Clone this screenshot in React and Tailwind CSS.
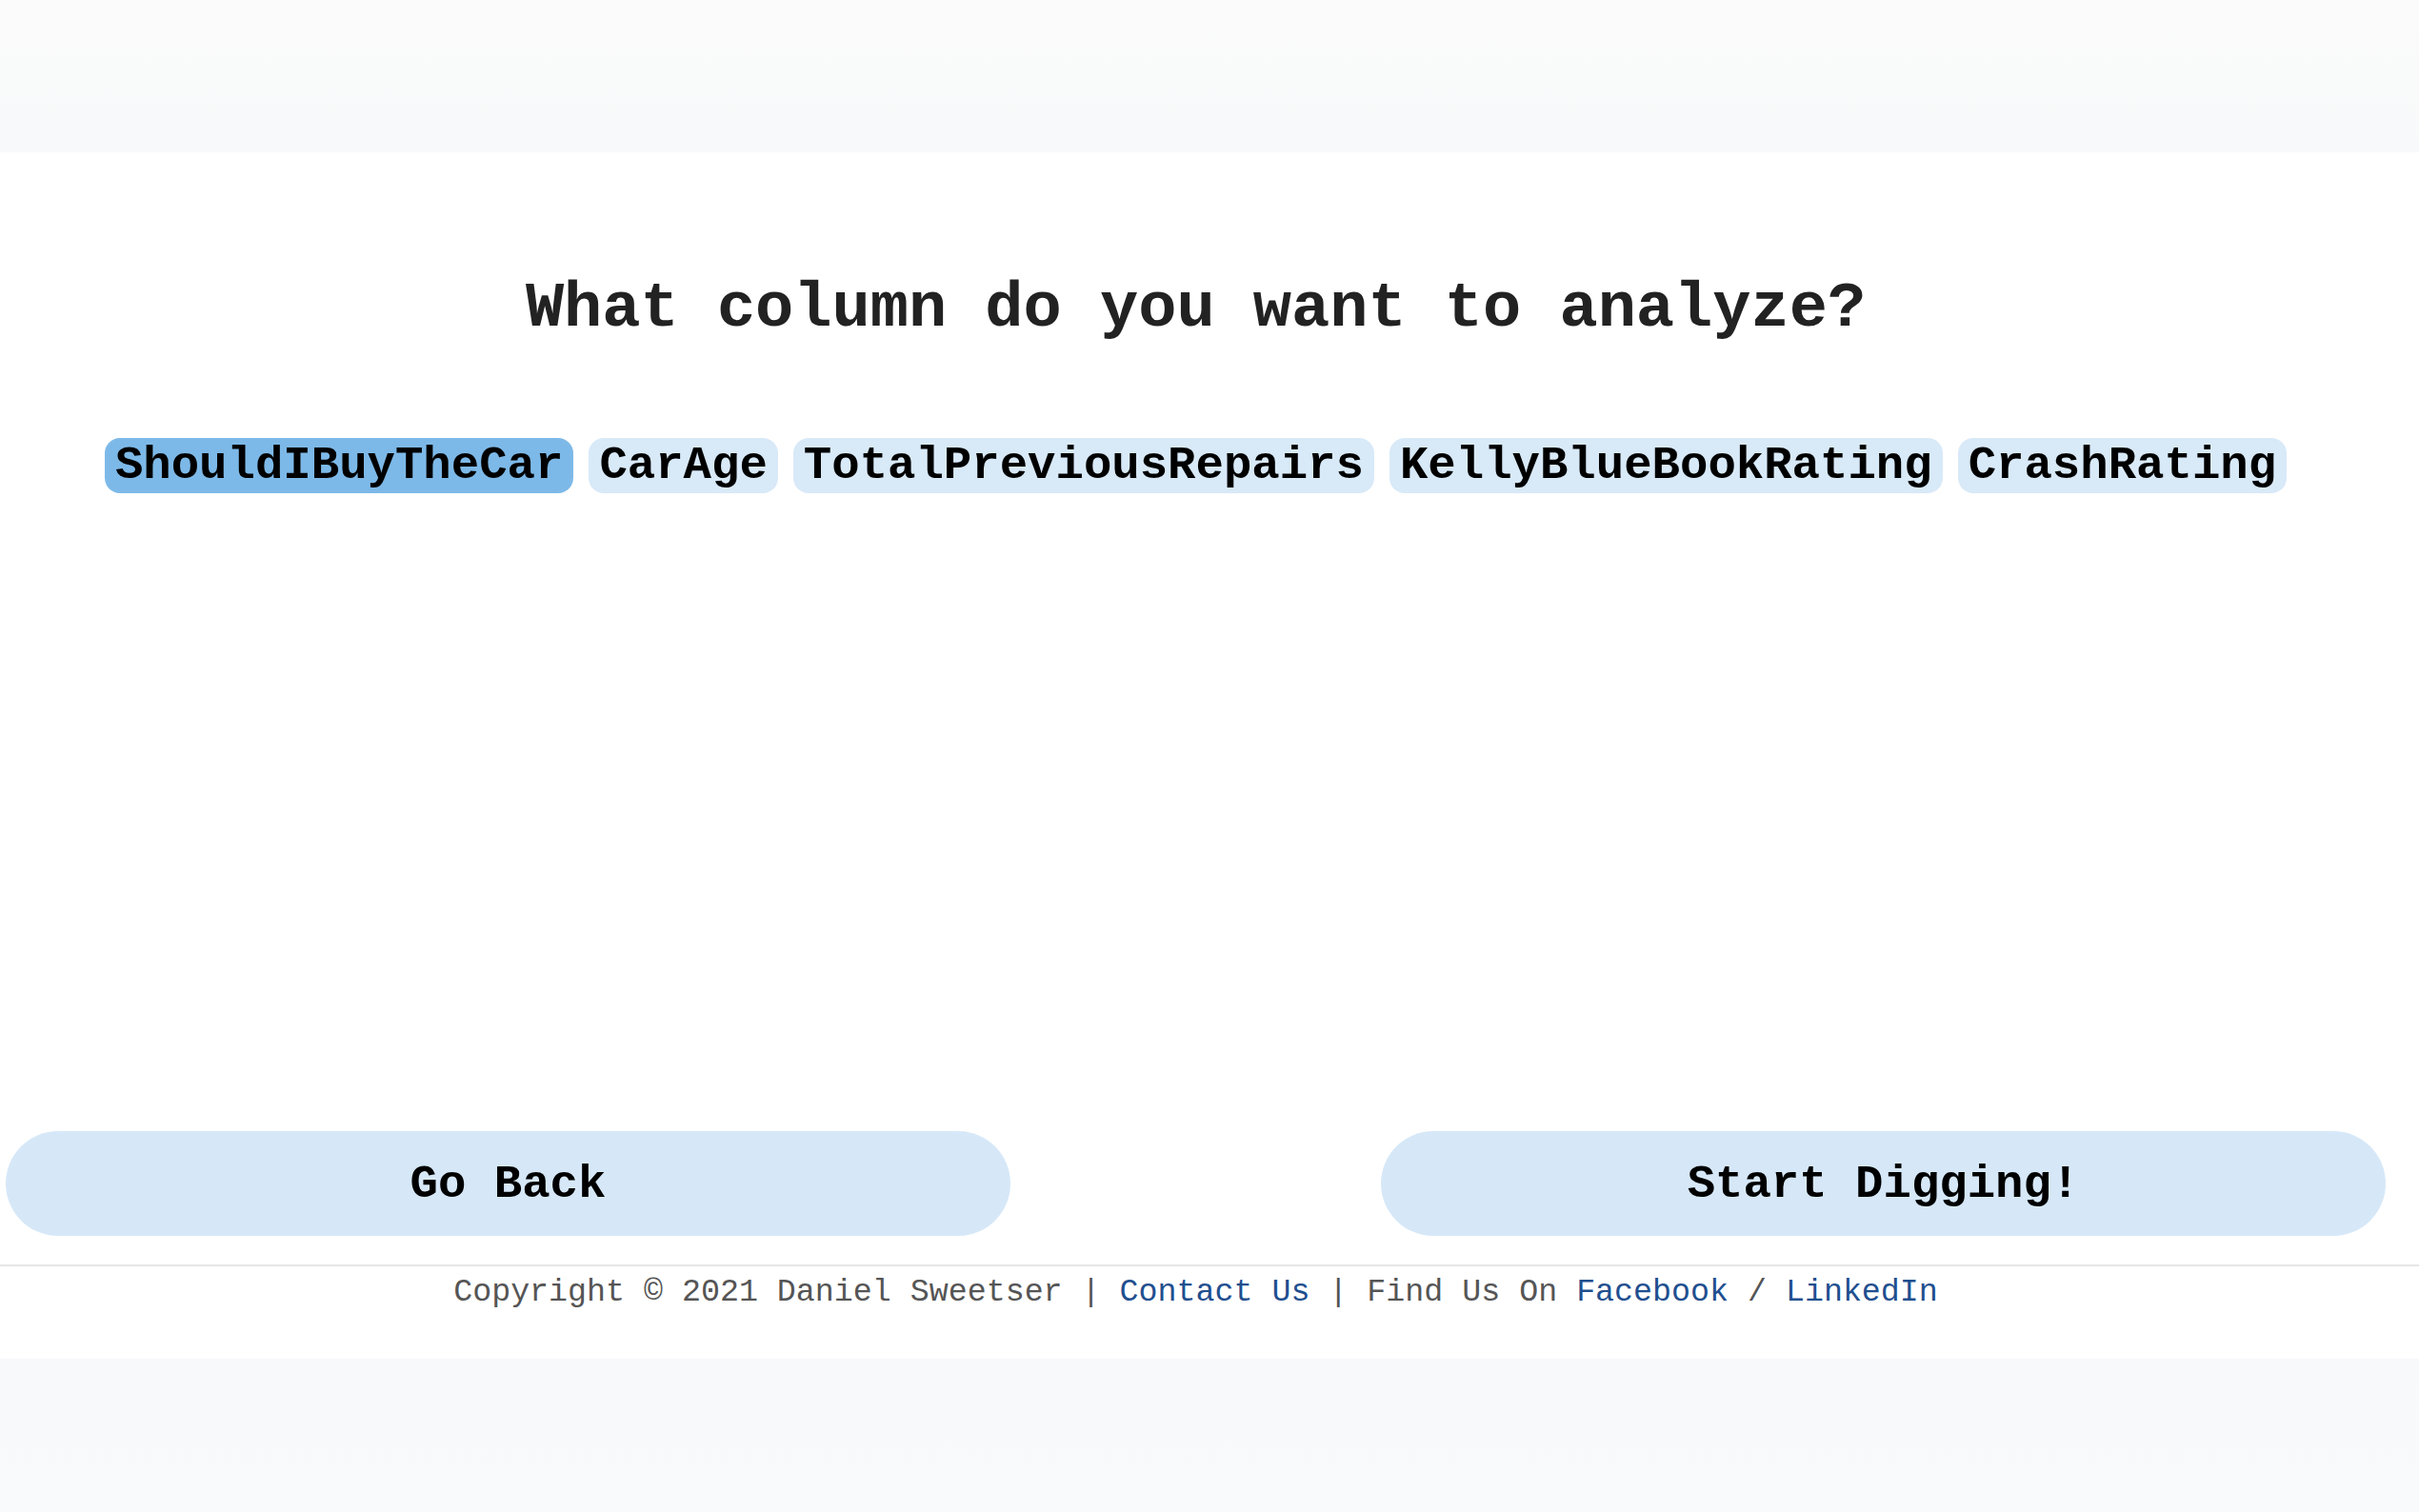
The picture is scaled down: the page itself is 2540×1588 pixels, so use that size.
import React, { useState } from "react";

const columns = ["ShouldIBuyTheCar", "CarAge", "TotalPreviousRepairs", "KellyBlueBookRating", "CrashRating"];

const App = () => {
  const [selected, setSelected] = useState("ShouldIBuyTheCar");

  return (
    <div className="min-h-screen flex flex-col bg-white font-['Courier_New','Liberation_Mono',monospace]">
      <div className="h-[160px] bg-gradient-to-b from-[#fbfbfb] to-[#f8f9fa]" />

      <div className="w-[2511px] flex flex-col bg-white">
        <h1 className="mt-[131px] text-center text-[67px] leading-none font-bold text-[#222]">
          What column do you want to analyze?
        </h1>

        <div className="mt-[102px] flex justify-center gap-4">
          {columns.map((c) => (
            <button
              key={c}
              onClick={() => setSelected(c)}
              className={
                c === selected
                  ? "h-[58px] px-[11px] rounded-[16px] bg-[#7db9e8] text-[49px] leading-none font-bold text-black"
                  : "h-[58px] px-[11px] rounded-[16px] bg-[#d8e9f8] text-[49px] leading-none font-bold text-black"
              }
            >
              {c}
            </button>
          ))}
        </div>

        <div className="mt-[670px] flex justify-between px-[6px]">
          <button className="w-[1055px] h-[110px] pt-[4px] rounded-full bg-[#d6e8f8] text-[49px] font-bold text-black">
            Go Back
          </button>
          <button className="w-[1055px] h-[110px] pt-[4px] rounded-full bg-[#d6e8f8] text-[49px] font-bold text-black">
            Start Digging!
          </button>
        </div>
      </div>

      <footer className="mt-[30px] border-t-2 border-[#e6e6e6] h-[99px] bg-white">
        <p className="w-[2511px] pt-[3px] text-center text-[33.3px] text-[#555]">
          Copyright © 2021 Daniel Sweetser |{" "}
          <a href="#" className="text-[#1f4f8f]">Contact Us</a> | Find Us On{" "}
          <a href="#" className="text-[#1f4f8f]">Facebook</a> /{" "}
          <a href="#" className="text-[#1f4f8f]">LinkedIn</a>
        </p>
      </footer>

      <div className="flex-1 bg-gradient-to-b from-[#f7f9fb] to-[#f9fafb]" />
    </div>
  );
};

export default App;
